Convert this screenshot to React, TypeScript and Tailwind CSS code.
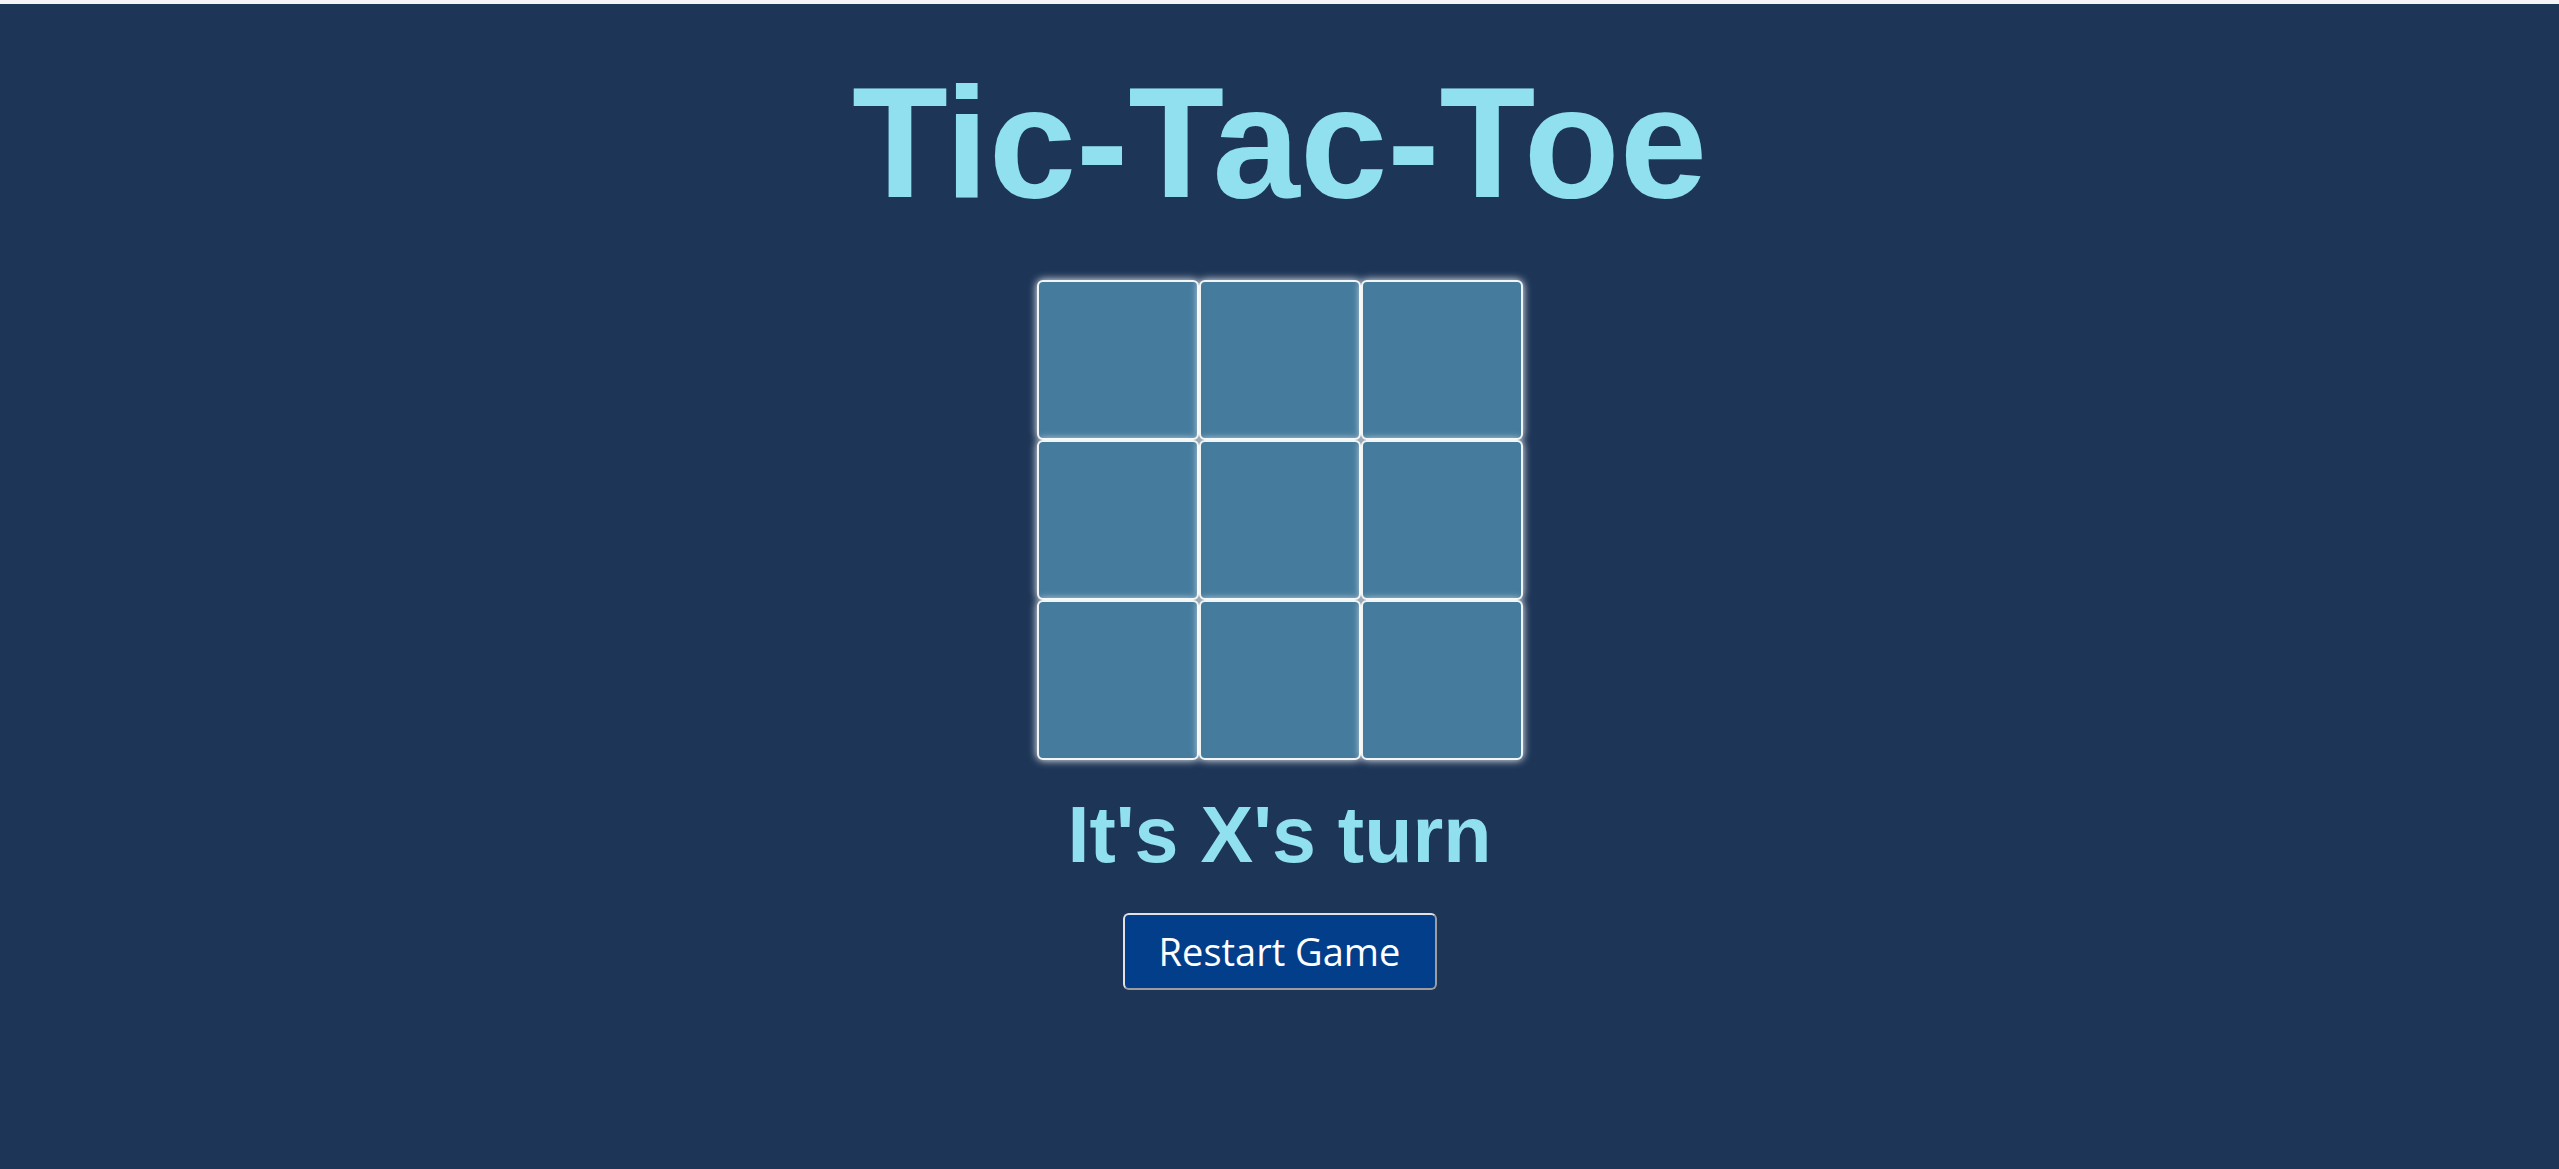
import { useState } from 'react'

type Cell = 'X' | 'O' | null

const LINES = [
  [0, 1, 2], [3, 4, 5], [6, 7, 8],
  [0, 3, 6], [1, 4, 7], [2, 5, 8],
  [0, 4, 8], [2, 4, 6],
]

function winnerOf(board: Cell[]): Cell {
  for (const [a, b, c] of LINES) {
    if (board[a] && board[a] === board[b] && board[a] === board[c]) return board[a]
  }
  return null
}

export default function App() {
  const [board, setBoard] = useState<Cell[]>(Array(9).fill(null))
  const [turn, setTurn] = useState<'X' | 'O'>('X')

  const winner = winnerOf(board)
  const full = board.every(Boolean)

  const play = (i: number) => {
    if (board[i] || winner) return
    const next = [...board]
    next[i] = turn
    setBoard(next)
    setTurn(turn === 'X' ? 'O' : 'X')
  }

  const restart = () => {
    setBoard(Array(9).fill(null))
    setTurn('X')
  }

  let status = `It's ${turn}'s turn`
  if (winner) status = `${winner} wins!`
  else if (full) status = "It's a draw!"

  return (
    <div className="bg-[#f4f4f6] pt-1">
      <div className="min-h-[1165px] bg-[#1d3557] flex flex-col items-center pt-[60px] font-['Liberation_Sans',Arial,sans-serif]">
        {/* Title */}
        <h1 className="text-[157px] leading-none font-bold text-[#90e0ef]">
          Tic-Tac-Toe
        </h1>

        {/* Board */}
        <div className="grid grid-cols-[repeat(3,162px)] grid-rows-[repeat(3,160px)] mt-[59px]">
          {board.map((cell, i) => (
            <button
              key={i}
              onClick={() => play(i)}
              className="bg-[#457b9d] border-2 border-[#f1f5f4] rounded-[6px] shadow-[0_0_8px_#ffffff] text-[96px] font-bold text-[#f1faee] leading-none cursor-pointer"
            >
              {cell}
            </button>
          ))}
        </div>

        {/* Status */}
        <p className="mt-[35px] text-[79px] leading-none font-bold text-[#90e0ef]">{status}</p>

        {/* Restart */}
        <button
          onClick={restart}
          className="mt-[39px] w-[314px] h-[77px] bg-[#023e8a] text-white text-[38px] rounded-[6px] border-2 border-t-[#e2e2e2] border-l-[#e2e2e2] border-r-[#9c9c9c] border-b-[#9c9c9c] font-['Open_Sans',sans-serif] cursor-pointer"
        >
          Restart Game
        </button>
      </div>
    </div>
  )
}
